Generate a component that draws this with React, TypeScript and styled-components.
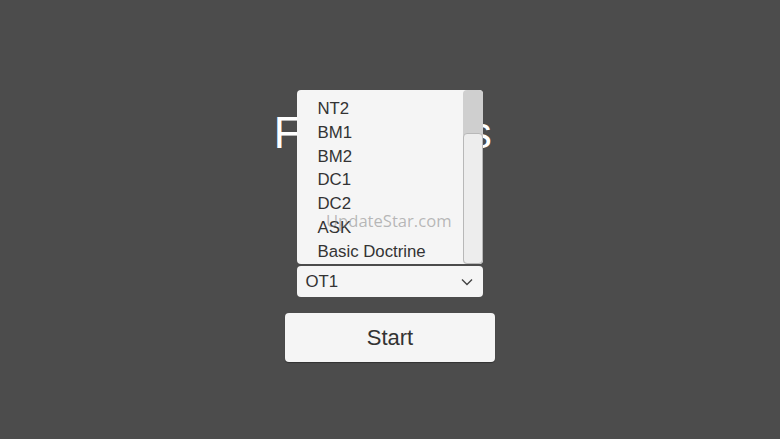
import React from "react";
import styled, { createGlobalStyle } from "styled-components";

const Global = createGlobalStyle`
  html, body { margin: 0; padding: 0; background: #4c4c4c; }
  body { font-family: "Liberation Sans", Arial, sans-serif; }
`;

const Screen = styled.div`
  width: 780px;
  height: 439px;
  background: #4c4c4c;
  display: flex;
  flex-direction: column;
  align-items: center;
  position: relative;
  overflow: hidden;
`;

const Title = styled.h1`
  margin: 112px 14px 0 0;
  font-size: 43.5px;
  line-height: 43px;
  letter-spacing: 0.6px;
  font-weight: 400;
  color: #ffffff;
  font-family: "Liberation Sans", Arial, sans-serif;
`;

const DropdownWrap = styled.div`
  position: relative;
  margin: 111px 1px 0 0;
  width: 186px;
`;

const DropdownButton = styled.div`
  height: 31px;
  box-sizing: border-box;
  background: #f5f5f5;
  border-radius: 4px;
  display: flex;
  align-items: center;
  justify-content: space-between;
  padding: 0 10px 0 9px;
  font-size: 16.8px;
  color: #333;
`;

const List = styled.div`
  position: absolute;
  left: 0;
  bottom: calc(100% + 2px);
  width: 186px;
  height: 174px;
  background: #f5f5f5;
  border-radius: 4px;
  display: flex;
  box-sizing: border-box;
`;

const Items = styled.div`
  flex: 1;
  padding-top: 7px;
`;

const Item = styled.div`
  height: 23.8px;
  line-height: 23.8px;
  padding-left: 21px;
  font-size: 16.8px;
  color: #333;
  white-space: nowrap;
`;

const Track = styled.div`
  width: 20px;
  height: 100%;
  background: #cfcfcf;
  border-radius: 4px;
  display: flex;
  flex-direction: column;
  justify-content: flex-end;
`;

const Handle = styled.div`
  height: 131px;
  box-sizing: border-box;
  background: #ededed;
  border: 1px solid #b8b8b8;
  border-radius: 4px;
`;

const StartButton = styled.button`
  margin-top: 16px;
  width: 210px;
  height: 49px;
  background: #f5f5f5;
  border: none;
  border-radius: 4px;
  box-shadow: 0 1px 1px rgba(0, 0, 0, 0.35);
  font-family: "Liberation Sans", Arial, sans-serif;
  font-size: 22px;
  color: #333;
  padding: 0;
`;

const Watermark = styled.div`
  position: absolute;
  left: 326px;
  top: 209px;
  font-family: "Open Sans", "Noto Sans", sans-serif;
  font-size: 16.6px;
  color: rgba(120, 120, 120, 0.5);
  pointer-events: none;
`;

const items = ["NT2", "BM1", "BM2", "DC1", "DC2", "ASK", "Basic Doctrine"];

export default function App() {
  return (
    <Screen>
      <Global />
      <Title>Flashcards</Title>
      <DropdownWrap>
        <List>
          <Items>
            {items.map((t) => (
              <Item key={t}>{t}</Item>
            ))}
          </Items>
          <Track>
            <Handle />
          </Track>
        </List>
        <DropdownButton>
          <span>OT1</span>
          <svg width="12" height="8" viewBox="0 0 12 8">
            <path d="M1 1.5 L6 6.5 L11 1.5" fill="none" stroke="#444" strokeWidth="1.4" />
          </svg>
        </DropdownButton>
      </DropdownWrap>
      <StartButton>Start</StartButton>
      <Watermark>UpdateStar.com</Watermark>
    </Screen>
  );
}
